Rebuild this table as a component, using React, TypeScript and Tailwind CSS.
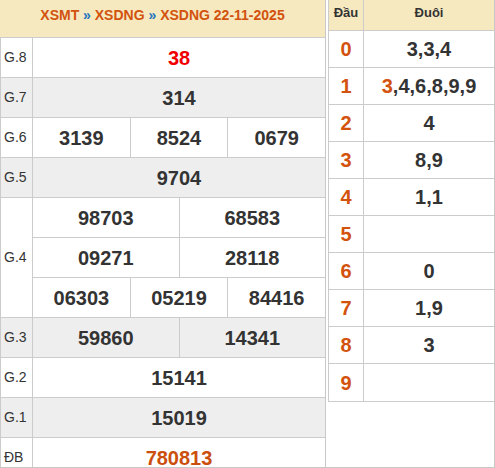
import React from "react";

type CellProps = { children?: React.ReactNode; className?: string; first?: boolean };

function Cell({ children, className = "", first = false }: CellProps) {
  return (
    <div
      className={
        "flex-1 basis-0 flex items-center justify-center text-[20px] font-bold " +
        (first ? "" : "border-l border-[#cccccc] ") +
        className
      }
    >
      {children}
    </div>
  );
}

function Label({ children, tall = false }: { children: React.ReactNode; tall?: boolean }) {
  return (
    <div
      className={
        "w-[33px] shrink-0 border-l border-r border-[#cccccc] flex items-center pl-[3px] text-[14px] text-[#333333] " +
        (tall ? "border-b h-[120px]" : "")
      }
    >
      {children}
    </div>
  );
}

function Row({ label, alt = false, children }: { label: string; alt?: boolean; children: React.ReactNode }) {
  return (
    <div className={"flex h-[40px] shrink-0 border-b border-[#cccccc] " + (alt ? "bg-[#eeeeee]" : "bg-white")}>
      <Label>{label}</Label>
      <div className="flex-1 flex">{children}</div>
    </div>
  );
}

function SubRow({ children }: { children: React.ReactNode }) {
  return <div className="flex h-[40px] shrink-0 border-b border-[#cccccc]">{children}</div>;
}

const loto: [string, React.ReactNode][] = [
  ["0", "3,3,4"],
  [
    "1",
    <>
      <span className="text-[#d2520e]">3</span>,4,6,8,9,9
    </>,
  ],
  ["2", "4"],
  ["3", "8,9"],
  ["4", "1,1"],
  ["5", ""],
  ["6", "0"],
  ["7", "1,9"],
  ["8", "3"],
  ["9", ""],
];

export default function App() {
  return (
    <div className="w-[495px] h-[468px] overflow-hidden flex border-b border-[#c8c8c8] bg-white font-['Liberation_Sans',Arial,sans-serif] text-[#333333]">
      <div className="w-[326px] shrink-0 border-r border-[#c8c8c8] flex flex-col">
        <div className="h-[38px] shrink-0 border-b border-[#cccccc] bg-[#f6e9bf] text-center pt-[7px] text-[14px] leading-[16px] font-bold text-[#d2520e]">
          XSMT <span className="text-[#1e73be]">»</span> XSDNG <span className="text-[#1e73be]">»</span> XSDNG 22-11-2025
        </div>
        <Row label="G.8">
          <Cell first className="text-[#f00000]">38</Cell>
        </Row>
        <Row label="G.7" alt>
          <Cell first>314</Cell>
        </Row>
        <Row label="G.6">
          <Cell first>3139</Cell>
          <Cell>8524</Cell>
          <Cell>0679</Cell>
        </Row>
        <Row label="G.5" alt>
          <Cell first>9704</Cell>
        </Row>
        <div className="flex h-[120px] shrink-0 bg-white">
          <Label tall>G.4</Label>
          <div className="flex-1 flex flex-col">
            <SubRow>
              <Cell first>98703</Cell>
              <Cell>68583</Cell>
            </SubRow>
            <SubRow>
              <Cell first>09271</Cell>
              <Cell>28118</Cell>
            </SubRow>
            <SubRow>
              <Cell first>06303</Cell>
              <Cell>05219</Cell>
              <Cell>84416</Cell>
            </SubRow>
          </div>
        </div>
        <Row label="G.3" alt>
          <Cell first>59860</Cell>
          <Cell>14341</Cell>
        </Row>
        <Row label="G.2">
          <Cell first>15141</Cell>
        </Row>
        <Row label="G.1" alt>
          <Cell first>15019</Cell>
        </Row>
        <Row label="ĐB">
          <Cell first className="text-[#cc4e0c]">780813</Cell>
        </Row>
      </div>
      <div className="w-[169px] shrink-0 border-r border-[#c8c8c8]">
        <div className="ml-[2px] border-l border-b border-[#cccccc]">
          <div className="flex h-[31px] border-b border-[#cccccc] bg-[#f6e9bf] text-[13px] leading-[15px] font-bold text-[#333333]">
            <div className="w-[35px] shrink-0 border-r border-[#cccccc] text-center pt-[5px]">Đầu</div>
            <div className="flex-1 text-center pt-[5px]">Đuôi</div>
          </div>
          {loto.map(([head, tail], i) => (
            <div
              key={head}
              className={"flex h-[37px] text-[20px] font-bold " + (i < loto.length - 1 ? "border-b border-[#cccccc]" : "")}
            >
              <div className="w-[35px] shrink-0 border-r border-[#cccccc] flex items-center justify-center text-[#d2520e]">
                {head}
              </div>
              <div className="flex-1 flex items-center justify-center text-[#333333]">{tail}</div>
            </div>
          ))}
        </div>
      </div>
    </div>
  );
}
